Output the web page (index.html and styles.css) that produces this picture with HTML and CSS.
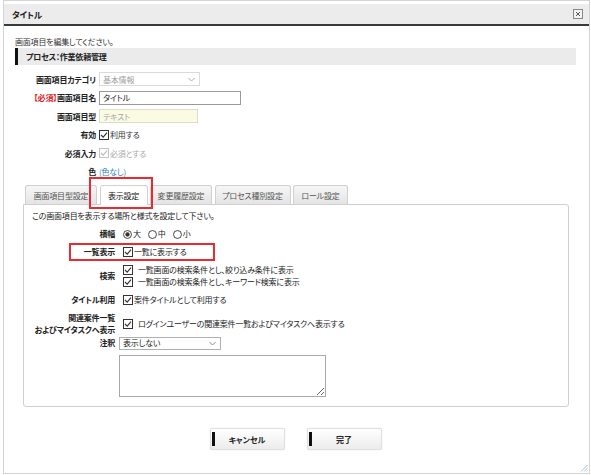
FILE: index.html
```html
<!DOCTYPE html>
<html lang="ja">
<head>
<meta charset="utf-8">
<title>タイトル</title>
<link rel="stylesheet" href="styles.css">
</head>
<body>
<div class="dialog">
  <div class="titlebar">
    <span class="title">タイトル</span>
    <span class="close"><svg width="10" height="10" viewBox="0 0 10 10"><rect x="0.5" y="0.5" width="9" height="9" fill="#f4f4f4" stroke="#888"/><path d="M3 3 L7 7 M7 3 L3 7" stroke="#555" stroke-width="1"/></svg></span>
  </div>
  <div class="body">
    <p class="intro">画面項目を編集してください。</p>
    <div class="section">プロセス：作業依頼管理</div>
    <div class="form">
      <div class="lbl">画面項目カテゴリ</div>
      <div class="ctl"><span class="select sel-cat disabled">基本情報<svg class="chev" width="7" height="5" viewBox="0 0 7 5"><path d="M0.5 1 L3.5 4 L6.5 1" fill="none" stroke="#aaa"/></svg></span></div>

      <div class="lbl"><span class="req">【必須】</span>画面項目名</div>
      <div class="ctl"><span class="input inp-name">タイトル</span></div>

      <div class="lbl">画面項目型</div>
      <div class="ctl"><span class="input inp-type">テキスト</span></div>

      <div class="lbl">有効</div>
      <div class="ctl"><span class="cb"><svg width="10" height="10" viewBox="0 0 10 10"><rect x="0.5" y="0.5" width="9" height="9" fill="#fff" stroke="#333"/><path d="M2 5 L4.2 7.2 L8 2.6" fill="none" stroke="#333" stroke-width="1.1"/></svg></span>利用する</div>

      <div class="lbl">必須入力</div>
      <div class="ctl muted"><span class="cb"><svg width="10" height="10" viewBox="0 0 10 10"><rect x="0.5" y="0.5" width="9" height="9" fill="#fff" stroke="#c4c4c4"/><path d="M2 5 L4.2 7.2 L8 2.6" fill="none" stroke="#bbb" stroke-width="1.1"/></svg></span>必須とする</div>

      <div class="lbl">色</div>
      <div class="ctl"><span class="link">(色なし)</span></div>
    </div>

    <div class="tabs">
      <span class="tab">画面項目型設定</span>
      <span class="tab active">表示設定</span>
      <span class="tab">変更履歴設定</span>
      <span class="tab">プロセス種別設定</span>
      <span class="tab">ロール設定</span>
      <span class="hl hl-tab"></span>
    </div>

    <div class="panel">
      <p class="desc">この画面項目を表示する場所と様式を設定して下さい。</p>
      <div class="prow">
        <div class="plbl">横幅</div>
        <div class="pctl radios">
          <span class="rd"><svg width="9" height="9" viewBox="0 0 10 10"><circle cx="5" cy="5" r="4.4" fill="#fff" stroke="#333"/><circle cx="5" cy="5" r="2.4" fill="#333"/></svg>大</span>
          <span class="rd"><svg width="9" height="9" viewBox="0 0 10 10"><circle cx="5" cy="5" r="4.4" fill="#fff" stroke="#333"/></svg>中</span>
          <span class="rd"><svg width="9" height="9" viewBox="0 0 10 10"><circle cx="5" cy="5" r="4.4" fill="#fff" stroke="#333"/></svg>小</span>
        </div>
      </div>
      <div class="prow hl-wrap">
        <div class="plbl">一覧表示</div>
        <div class="pctl"><span class="cb"><svg width="10" height="10" viewBox="0 0 10 10"><rect x="0.5" y="0.5" width="9" height="9" fill="#fff" stroke="#333"/><path d="M2 5 L4.2 7.2 L8 2.6" fill="none" stroke="#333" stroke-width="1.1"/></svg></span>一覧に表示する</div>
        <span class="hl hl-row"></span>
      </div>
      <div class="prow">
        <div class="plbl">検索</div>
        <div class="pctl lines">
          <div><span class="cb gap"><svg width="10" height="10" viewBox="0 0 10 10"><rect x="0.5" y="0.5" width="9" height="9" fill="#fff" stroke="#333"/><path d="M2 5 L4.2 7.2 L8 2.6" fill="none" stroke="#333" stroke-width="1.1"/></svg></span>一覧画面の検索条件とし、絞り込み条件に表示</div>
          <div><span class="cb gap"><svg width="10" height="10" viewBox="0 0 10 10"><rect x="0.5" y="0.5" width="9" height="9" fill="#fff" stroke="#333"/><path d="M2 5 L4.2 7.2 L8 2.6" fill="none" stroke="#333" stroke-width="1.1"/></svg></span>一覧画面の検索条件とし、キーワード検索に表示</div>
        </div>
      </div>
      <div class="prow">
        <div class="plbl">タイトル利用</div>
        <div class="pctl"><span class="cb"><svg width="10" height="10" viewBox="0 0 10 10"><rect x="0.5" y="0.5" width="9" height="9" fill="#fff" stroke="#333"/><path d="M2 5 L4.2 7.2 L8 2.6" fill="none" stroke="#333" stroke-width="1.1"/></svg></span>案件タイトルとして利用する</div>
      </div>
      <div class="prow rel">
        <div class="plbl">関連案件一覧<br>およびマイタスクへ表示</div>
        <div class="pctl"><span class="cb gap"><svg width="10" height="10" viewBox="0 0 10 10"><rect x="0.5" y="0.5" width="9" height="9" fill="#fff" stroke="#333"/><path d="M2 5 L4.2 7.2 L8 2.6" fill="none" stroke="#333" stroke-width="1.1"/></svg></span>ログインユーザーの関連案件一覧およびマイタスクへ表示する</div>
      </div>
      <div class="prow note-row">
        <div class="plbl">注釈</div>
        <div class="pctl shift"><span class="select sel-note">表示しない<svg class="chev" width="7" height="5" viewBox="0 0 7 5"><path d="M0.5 1 L3.5 4 L6.5 1" fill="none" stroke="#888"/></svg></span></div>
      </div>
      <div class="prow area-row">
        <div class="plbl"></div>
        <div class="pctl shift"><textarea class="note"></textarea></div>
      </div>
    </div>

    <div class="buttons">
      <button class="btn">キャンセル</button>
      <button class="btn">完了</button>
    </div>
  </div>
  <svg class="grip" width="8" height="8" viewBox="0 0 8 8"><path d="M7.5 1 L1 7.5 M7.5 4 L4 7.5 M7.5 6.5 L6.5 7.5" stroke="#8fb3d0" stroke-width="0.8"/></svg>
</div>
</body>
</html>
```

FILE: styles.css
```css
* { box-sizing: border-box; }
html, body { margin: 0; padding: 0; background: #fff; }
body {
  font-family: "Noto Sans CJK JP", "Noto Sans", sans-serif;
  font-size: 8px;
  letter-spacing: -0.2px;
  font-feature-settings: "palt";
  color: #333;
  width: 591px;
  height: 475px;
  overflow: hidden;
}
p { margin: 0; }

.dialog {
  position: relative;
  margin: 0 1px 0 3px;
  height: 474px;
  border: 1px solid #d4d4d4;
  display: flex;
  flex-direction: column;
}

.titlebar {
  margin-top: 3px;
  height: 22px;
  background: #ececec;
  border-bottom: 2px solid #3a3a3a;
  display: flex;
  align-items: center;
  justify-content: space-between;
  padding: 0 6px 0 8px;
}
.title { font-weight: bold; color: #222; font-size: 8.5px; }
.close { display: flex; }

.body { padding: 10px 13px 0 11px; }
.intro { line-height: 12px; height: 12px; color: #333; }

.section {
  height: 17px;
  background: #ebebeb;
  border-left: 3px solid #111;
  padding-left: 8px;
  font-weight: bold;
  color: #222;
  display: flex;
  align-items: center;
}

.form {
  margin-top: 5px;
  display: grid;
  grid-template-columns: 81px 1fr;
  grid-template-rows: 18px 19px 18px 19px 18px 18px;
  column-gap: 3px;
}
.lbl {
  font-weight: bold;
  color: #222;
  display: flex;
  align-items: center;
  justify-content: flex-end;
  white-space: nowrap;
}
.req { color: #e0201a; font-weight: bold; }
.ctl { display: flex; align-items: center; white-space: nowrap; }
.muted { color: #aaa; }
.link { color: #2b86c5; }

.select, .input {
  height: 14px;
  display: flex;
  align-items: center;
  padding: 0 4px 0 3px;
  border: 1px solid #c8c8c8;
  background: #fff;
}
.select .chev { margin-left: auto; }
.sel-cat { width: 101px; color: #a0a0a0; border-color: #dadada; }
.inp-name { width: 142px; color: #222; border-color: #9a9a9a; }
.inp-type { width: 99px; color: #a8a8a8; background: #fbfbe4; border-color: #dcdcc8; }

.cb { display: inline-flex; margin-right: 1px; }
.cb.gap { margin-right: 5px; }
.cb svg, .rd svg { display: block; }

.tabs {
  position: relative;
  margin-top: 5px;
  margin-left: 10px;
  display: flex;
  gap: 2.5px;
  height: 19px;
  align-items: flex-end;
}
.tab {
  height: 19px;
  display: flex;
  align-items: center;
  justify-content: center;
  color: #555;
  background: linear-gradient(#f6f6f6, #e4e4e4);
  border: 1px solid #d0d0d0;
  border-bottom: none;
  border-radius: 3px 3px 0 0;
  white-space: nowrap;
}
.tab:nth-child(1) { width: 72px; }
.tab:nth-child(2) { width: 48px; }
.tab:nth-child(3) { width: 62px; }
.tab:nth-child(4) { width: 76px; }
.tab:nth-child(5) { width: 55px; }
.tab.active {
  background: #fff;
  color: #111;
  height: 20px;
  margin-bottom: -1px;
  position: relative;
  z-index: 1;
}

.hl { position: absolute; border: 2px solid #ea2a2f; pointer-events: none; z-index: 3; }
.hl-tab { left: 64px; top: -8px; width: 64px; height: 32px; }

.panel {
  margin: 0 7px 0 8px;
  border: 1px solid #cfcfcf;
  border-radius: 0 3px 3px 3px;
  padding: 5px 8px 10px 8px;
  height: 203px;
}
.desc { line-height: 12px; height: 12px; margin-bottom: 3px; color: #222; }

.prow {
  display: flex;
  align-items: center;
  column-gap: 8px;
  padding: 3px 0;
  min-height: 18px;
  line-height: 12px;
}
.prow.rel { padding: 3px 0 0; }
.prow.note-row { padding: 0; min-height: 14px; }
.prow.area-row { padding: 5px 0 0; }
.hl-wrap { position: relative; }
.hl-row { left: 37px; top: 0; width: 146px; height: 18px; }

.plbl {
  width: 83px;
  flex: none;
  text-align: right;
  font-weight: bold;
  color: #222;
  white-space: nowrap;
  line-height: 12px;
}
.pctl { display: flex; align-items: center; color: #222; white-space: nowrap; }
.pctl.shift { margin-left: -4px; }
.pctl.lines { flex-direction: column; align-items: flex-start; }
.pctl.lines > div { display: flex; align-items: center; height: 12px; }
.radios { gap: 7px; }
.rd { display: inline-flex; align-items: center; gap: 1px; }

.sel-note { width: 102px; color: #222; border-color: #b0b0b0; height: 13px; }

.note {
  width: 207px;
  height: 42px;
  border: 1px solid #a9a9a9;
  margin: 0;
  padding: 2px;
  font: inherit;
  display: block;
}

.buttons {
  margin-top: 21px;
  display: flex;
  justify-content: center;
  gap: 22px;
}
.btn {
  position: relative;
  width: 75px;
  height: 22px;
  font: inherit;
  font-weight: bold;
  color: #222;
  background: linear-gradient(#ffffff, #ececec);
  border: 1px solid #e0e0e0;
  border-radius: 2px;
  box-shadow: 0 0 1px #ccc;
  padding: 0;
}
.btn::before {
  content: "";
  position: absolute;
  left: 1px;
  top: 3px;
  width: 3px;
  height: 14px;
  background: #111;
}

.grip { position: absolute; right: 1px; bottom: 1px; }
```
